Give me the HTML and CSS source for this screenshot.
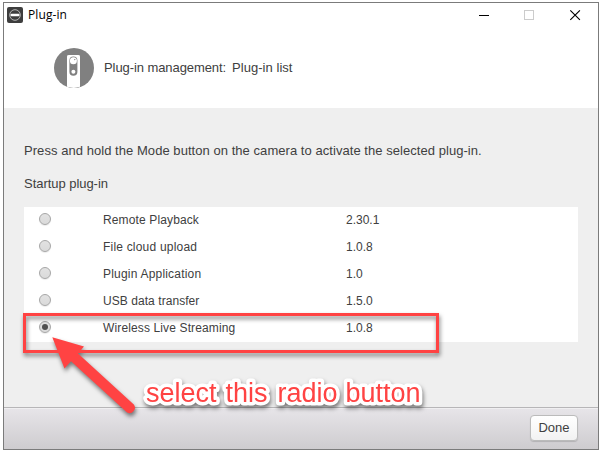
FILE: index.html
```html
<!DOCTYPE html>
<html lang="en">
<head>
<meta charset="utf-8">
<title>Plug-in</title>
<link rel="stylesheet" href="styles.css">
</head>
<body>
<div class="window">
  <header class="header">
    <div class="titlebar">
      <svg class="app-icon" width="16" height="16" viewBox="0 0 16 16">
        <rect width="16" height="16" rx="2" fill="#3e3e3e"/>
        <circle cx="8" cy="8" r="5.3" fill="none" stroke="#c4c4c4" stroke-width=".9"/>
        <rect x="3.5" y="6.8" width="9" height="2.4" rx="1" fill="#fff"/>
      </svg>
      <span class="title">Plug-in</span>
      <svg class="controls" width="102" height="12" viewBox="0 0 102 12" fill="none">
        <path d="M0 6.5h10" stroke="#000"/>
        <rect x="45.5" y="1.5" width="9" height="9" stroke="#ccc"/>
        <path d="M91.3 1.3l9.6 9.6M100.9 1.3l-9.6 9.6" stroke="#000" stroke-width="1.15"/>
      </svg>
    </div>
    <div class="heading">
      <svg width="40" height="40" viewBox="0 0 40 40">
        <circle cx="20" cy="20" r="20" fill="#808080"/>
        <path d="M13 38.8V8.2Q13 7 15 7h9.2q1.8 0 1.8 1.2v30.6Q20 41 13 38.8Z" fill="#fff"/>
        <rect x="15.4" y="8.4" width="8" height="19.4" rx="4" fill="#808080"/>
        <circle cx="19.4" cy="12.7" r="3.5" fill="#fff"/>
        <circle cx="20.8" cy="11.6" r=".7" fill="#808080"/>
        <circle cx="19.4" cy="23.8" r="2" fill="#fff"/>
      </svg>
      <span class="crumb">Plug-in management:</span>
      <span class="page">Plug-in list</span>
    </div>
  </header>
  <main class="content">
    <p class="hint">Press and hold the Mode button on the camera to activate the selected plug-in.</p>
    <p class="label">Startup plug-in</p>
    <div class="list">
      <div class="row"><i class="radio"></i><span class="name">Remote Playback</span><span class="ver">2.30.1</span></div>
      <div class="row"><i class="radio"></i><span class="name wide">File cloud upload</span><span class="ver">1.0.8</span></div>
      <div class="row"><i class="radio"></i><span class="name wide">Plugin Application</span><span class="ver">1.0</span></div>
      <div class="row"><i class="radio"></i><span class="name tight">USB data transfer</span><span class="ver">1.5.0</span></div>
      <div class="row"><i class="radio checked"></i><span class="name">Wireless Live Streaming</span><span class="ver">1.0.8</span></div>
    </div>
  </main>
  <footer class="footer"><button class="done">Done</button></footer>
</div>
<svg class="marks" width="600" height="454" viewBox="0 0 600 454">
  <rect x="24.5" y="314.5" width="413" height="37" fill="none" stroke="#ff4343" stroke-width="3"/>
  <path d="M52.3 337.3L84 346.5L78 353.5L133.8 404.5A5.3 5.3 0 0 1 126.8 412.2L71 361.2L64.5 368.5Z" fill="#ff4343"/>
  <text class="callout" x="146" y="402">select <tspan x="225.5">this</tspan> <tspan x="277.5">radio</tspan> <tspan x="345.5">button</tspan></text>
</svg>
</body>
</html>
```
FILE: styles.css
```css
* { box-sizing: border-box; }
body {
  margin: 0;
  padding: 2px 1px 4px 3px;
  width: 600px;
  height: 454px;
  overflow: hidden;
  background: #fff;
  color: #404040;
  font-family: "Liberation Sans", Arial, sans-serif;
}
.window {
  display: flex;
  flex-direction: column;
  height: 448px;
  border: 1px solid #7b7b7b;
  background: #efefef;
}
.header { height: 105px; background: #fff; }
.titlebar {
  display: flex;
  align-items: center;
  height: 24px;
  padding: 0 17px 0 3px;
}
.title {
  margin-left: 5px;
  color: #000;
  font: 12px/16px "Open Sans", sans-serif;
  letter-spacing: .1px;
}
.controls { margin-left: auto; }
.heading {
  display: flex;
  align-items: center;
  margin: 21px 0 0 50px;
  font-size: 13px;
  line-height: 15px;
  white-space: nowrap;
}
.crumb { margin: 0 0 2px 10px; letter-spacing: -.08px; }
.page { margin: 0 0 2px 6px; letter-spacing: .04px; }
.content { flex: 1; padding: 35px 20px 0; }
.hint, .label {
  margin: 0 0 17px;
  font-size: 13px;
  line-height: 16px;
  white-space: nowrap;
}
.hint { letter-spacing: .05px; }
.label { margin-bottom: 15px; letter-spacing: -.04px; }
.list { background: #fff; }
.row {
  display: grid;
  grid-template-columns: 64px 243px 1fr;
  align-items: center;
  height: 27px;
  padding: 0 0 2px 15px;
  font-size: 12px;
}
.name { letter-spacing: .13px; }
.wide { letter-spacing: .2px; }
.tight { letter-spacing: .06px; }
.radio {
  display: flex;
  width: 12px;
  height: 12px;
  margin-top: -2px;
  border: 1px solid #a6a6a6;
  border-radius: 50%;
  background: linear-gradient(#e2e2e2, #dadada);
  box-shadow: 0 1px 1px rgba(0, 0, 0, .08);
}
.checked::after {
  content: "";
  width: 6px;
  height: 6px;
  margin: auto;
  border-radius: 50%;
  background: #505050;
}
.footer {
  display: flex;
  justify-content: flex-end;
  height: 42px;
  padding: 7px 20px 0 0;
  border-top: 1px solid #b7b6b8;
  background: linear-gradient(#e7e5e9, #cecccf);
  box-shadow: inset 0 1px #f0eff1;
}
.done {
  width: 48px;
  height: 26px;
  padding: 0 0 2px;
  border: 1px solid #bbb;
  border-radius: 4px;
  background: linear-gradient(#fff, #f2f2f2);
  box-shadow: 0 1px 1px rgba(0, 0, 0, .15);
  color: #404040;
  font: 13px "Liberation Sans", Arial, sans-serif;
}
.marks {
  position: absolute;
  left: 0;
  top: 0;
  filter: drop-shadow(1px 3px 2px rgba(0, 0, 0, .5));
}
.callout {
  fill: #ff4343;
  stroke: #fff;
  stroke-width: 7px;
  stroke-linejoin: round;
  paint-order: stroke fill;
  font-size: 27px;
}
```
